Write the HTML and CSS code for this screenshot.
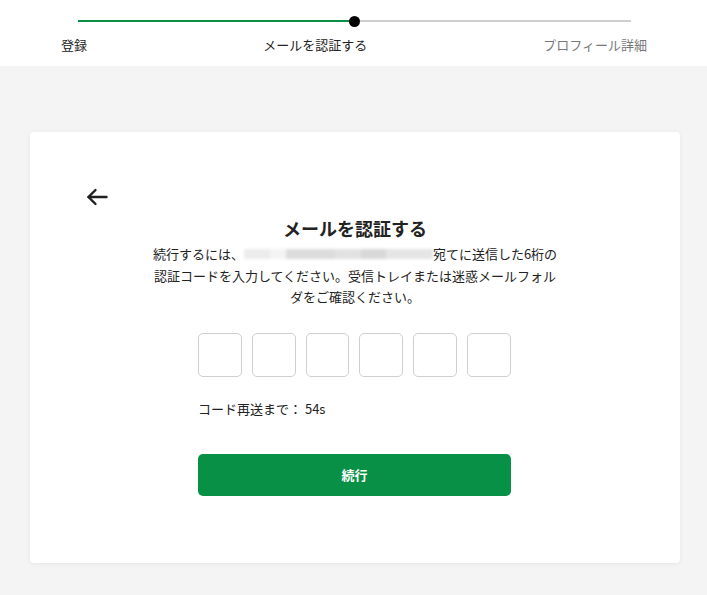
FILE: index.html
```html
<!DOCTYPE html>
<html lang="ja">
<head>
<meta charset="utf-8">
<title>メールを認証する</title>
<link rel="stylesheet" href="styles.css">
</head>
<body>
<header class="header">
  <div class="track">
    <div class="track-done"></div>
    <div class="track-todo"></div>
    <span class="track-dot"></span>
  </div>
  <div class="steps">
    <span class="step">登録</span>
    <span class="step">メールを認証する</span>
    <span class="step step-muted">プロフィール詳細</span>
  </div>
</header>
<main class="page">
  <section class="card">
    <button class="back" aria-label="戻る">
      <svg width="22" height="18" viewBox="0 0 22 18" fill="none" stroke="#1f1f1f" stroke-width="2.4" stroke-linecap="round" stroke-linejoin="round">
        <path d="M20.5 9H2.5"/>
        <path d="M9.5 2L2.5 9l7 7"/>
      </svg>
    </button>
    <h1 class="title">メールを認証する</h1>
    <p class="desc">続行するには、<span class="masked"></span>宛てに送信した6桁の認証コードを入力してください。受信トレイまたは迷惑メールフォルダをご確認ください。</p>
    <div class="form">
      <div class="code">
        <input class="digit" maxlength="1">
        <input class="digit" maxlength="1">
        <input class="digit" maxlength="1">
        <input class="digit" maxlength="1">
        <input class="digit" maxlength="1">
        <input class="digit" maxlength="1">
      </div>
      <p class="resend">コード再送まで： 54s</p>
      <button class="submit">続行</button>
    </div>
  </section>
</main>
</body>
</html>
```
FILE: styles.css
```css
* { box-sizing: border-box; }
html, body { margin: 0; padding: 0; }
body {
  background: #f4f4f4;
  font-family: "Noto Sans CJK JP", "Noto Sans", sans-serif;
  color: #222;
  width: 707px;
  height: 595px;
  overflow: hidden;
}
.header {
  background: #fff;
  height: 66px;
  padding: 20px 60px 0 61px;
}
.track {
  position: relative;
  display: flex;
  height: 2px;
  margin: 0 16px 0 17px;
}
.track-done { flex: 1; background: #0a8f47; }
.track-todo { flex: 1; background: #cfcfcf; }
.track-dot {
  position: absolute;
  left: 50%;
  top: 50%;
  width: 11px;
  height: 11px;
  margin: -5.5px 0 0 -5.5px;
  border-radius: 50%;
  background: #000;
}
.steps {
  display: flex;
  justify-content: space-between;
  margin-top: 13px;
  font-size: 13px;
  line-height: 20px;
}
.step { color: #222; }
.step-muted { color: #777; }
.page {
  padding: 66px 27px 0 30px;
}
.card {
  background: #fff;
  width: 650px;
  height: 431px;
  border-radius: 4px;
  box-shadow: 0 1px 5px rgba(0,0,0,0.06);
  padding: 56px 56px 0 56px;
  display: flex;
  flex-direction: column;
  align-items: center;
}
.back {
  align-self: flex-start;
  border: 0;
  background: none;
  padding: 0;
  width: 22px;
  height: 18px;
  display: block;
  cursor: pointer;
}
.back svg { display: block; }
.title {
  margin: 10px 0 0;
  font-size: 18px;
  line-height: 24px;
  font-weight: 700;
  color: #222;
}
.desc {
  margin: 3px 0 0;
  width: 410px;
  text-align: center;
  font-size: 13px;
  line-height: 21.5px;
  color: #222;
}
.masked {
  display: inline-block;
  width: 189px;
  height: 10px;
  vertical-align: 0;
  background: linear-gradient(90deg, #ececec 0 14%, #f4f4f4 14% 22%, #dcdcdc 22% 48%, #e2e2e2 48% 62%, #d8d8d8 62% 75%, #e5e5e5 75% 100%);
  filter: blur(1.5px);
}
.form {
  width: 313px;
  margin-left: -1px;
  display: flex;
  flex-direction: column;
}
.code {
  display: flex;
  gap: 10px;
  margin-top: 25px;
}
.digit {
  flex: 1;
  min-width: 0;
  height: 44px;
  border: 1px solid #cfcfcf;
  border-radius: 5px;
  background: #fff;
  padding: 0;
  font: inherit;
  text-align: center;
}
.resend {
  margin: 22px 0 0;
  font-size: 13px;
  line-height: 20px;
  color: #222;
}
.submit {
  margin-top: 35px;
  height: 42px;
  border: 0;
  border-radius: 5px;
  background: #089146;
  color: #fff;
  font-family: inherit;
  font-size: 13px;
  font-weight: 700;
  cursor: pointer;
}
```
